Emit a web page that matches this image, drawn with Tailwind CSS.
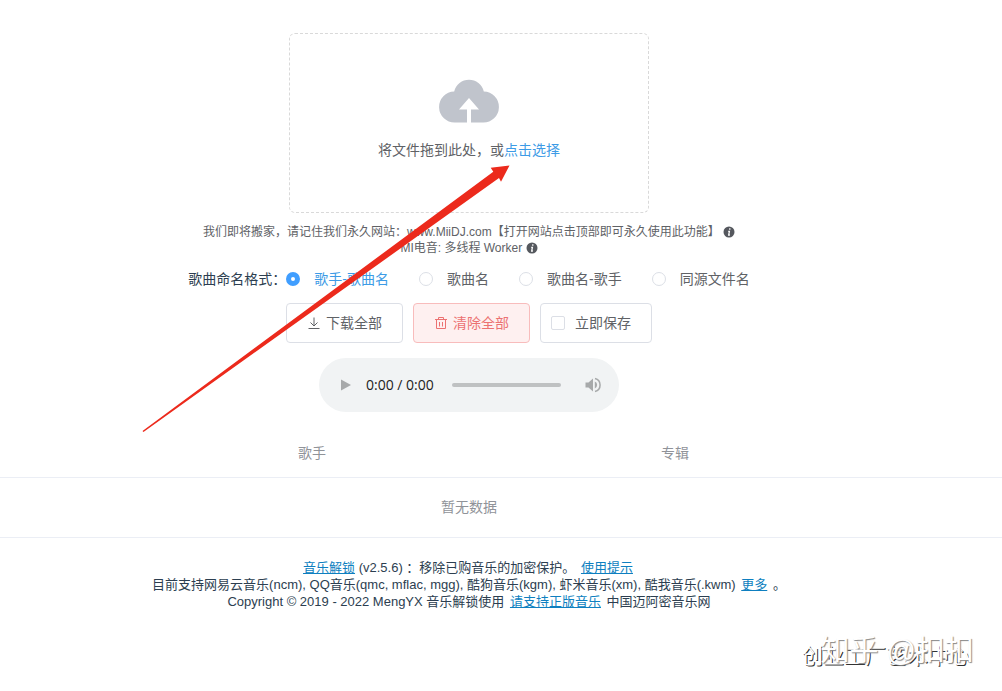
<!DOCTYPE html>
<html lang="zh-CN">
<head>
  <meta charset="UTF-8">
  <meta name="viewport" content="width=device-width, initial-scale=1">
  <title>音乐解锁</title>
  <script src="https://cdn.jsdelivr.net/npm/@tailwindcss/browser@4"></script>
</head>
<body class="relative min-h-screen overflow-x-hidden bg-white font-['Liberation_Sans','Noto_Sans_CJK_SC',sans-serif] text-sm text-[#606266]">

  <main class="flex flex-col items-center pt-[33px] pr-16">
    <!-- Upload -->
    <label class="flex h-[180px] w-[360px] cursor-pointer flex-col items-center rounded-md border border-dashed border-[#d9d9d9] pt-[43px]">
      <svg class="h-[46px] w-[60px]" viewBox="0 0 60 46" fill="#c0c4cc" aria-hidden="true">
        <path d="M16 45.500A15.500 15.500 0 1 1 15.200 14.500A15.200 15.200 0 0 1 44.800 14.500A15.500 15.500 0 1 1 44 45.500H32V32.500H40L30 21L20 32.500H28V45.500Z"/>
      </svg>
      <span class="mt-[17px] leading-5">将文件拖到此处，或<span class="text-[#3d9be6]">点击选择</span></span>
      <input type="file" class="sr-only">
    </label>

    <div class="mt-[11px] text-center text-xs leading-4">
      <p>我们即将搬家，请记住我们永久网站：www.MiiDJ.com【打开网站点击顶部即可永久使用此功能】
        <svg class="inline h-3 w-3 align-[-2px]" viewBox="0 0 12 12" aria-hidden="true"><circle cx="6" cy="6" r="5.500" fill="#55585e"/><path d="M6.800 2.300v1.500M5.200 5.300h1.200l-.7 3.700h1.200" stroke="#fff" stroke-width="1.300" fill="none"/></svg>
      </p>
      <p>MI电音: 多线程 Worker
        <svg class="inline h-3 w-3 align-[-2px]" viewBox="0 0 12 12" aria-hidden="true"><circle cx="6" cy="6" r="5.500" fill="#55585e"/><path d="M6.800 2.300v1.500M5.200 5.300h1.200l-.7 3.700h1.200" stroke="#fff" stroke-width="1.300" fill="none"/></svg>
      </p>
    </div>

    <!-- Naming format -->
    <fieldset class="mt-[13px] flex items-center leading-5">
      <legend class="float-left text-[#2c3e50]">歌曲命名格式：</legend>
      <div class="flex gap-[30px]">
        <label class="flex items-center gap-[14px] text-[#3d9be6]"><input type="radio" name="format" checked class="h-[14px] w-[14px] appearance-none rounded-full border border-[#dcdfe6] checked:border-5 checked:border-[#409eff]">歌手-歌曲名</label>
        <label class="flex items-center gap-[14px]"><input type="radio" name="format" class="h-[14px] w-[14px] appearance-none rounded-full border border-[#dcdfe6] checked:border-5 checked:border-[#409eff]">歌曲名</label>
        <label class="flex items-center gap-[14px]"><input type="radio" name="format" class="h-[14px] w-[14px] appearance-none rounded-full border border-[#dcdfe6] checked:border-5 checked:border-[#409eff]">歌曲名-歌手</label>
        <label class="flex items-center gap-[14px]"><input type="radio" name="format" class="h-[14px] w-[14px] appearance-none rounded-full border border-[#dcdfe6] checked:border-5 checked:border-[#409eff]">同源文件名</label>
      </div>
    </fieldset>

    <div class="mt-[14px] flex gap-[10px]">
      <button type="button" class="flex h-10 items-center gap-[5px] rounded border border-[#dcdfe6] px-5">
        <svg class="h-[14px] w-[14px]" viewBox="0 0 14 14" fill="none" stroke="#606266" aria-hidden="true"><path d="M7 1.500v8.500M3.500 6.500l3.500 3.500 3.500-3.500M1.500 12.500h11"/></svg>
        下载全部
      </button>
      <button type="button" class="flex h-10 items-center gap-[5px] rounded border border-[#f8bcbc] bg-[#fef0f0] px-5 text-[#ec7272]">
        <svg class="h-[14px] w-[14px]" viewBox="0 0 14 14" fill="none" stroke="#ec7272" aria-hidden="true"><path d="M1 3.500h12M4.500 3.500v-2h5v2M2.500 3.500v9h9v-9M5.500 6v4.500M8.500 6v4.500"/></svg>
        清除全部
      </button>
      <label class="flex h-10 items-center gap-[10px] rounded border border-[#dcdfe6] pr-5 pl-[10px]">
        <input type="checkbox" class="h-[14px] w-[14px] appearance-none rounded-xs border border-[#dcdfe6] checked:bg-[#409eff]">立即保存
      </label>
    </div>

    <!-- Player -->
    <div class="mt-[15px] flex h-[54px] w-[300px] items-center rounded-full bg-[#f1f3f4] pr-[17px] pl-[22px]">
      <button type="button" aria-label="播放"><svg class="h-3 w-[10px]" viewBox="0 0 10 12" fill="#a7a9aa"><path d="M0 0.500L10 6L0 11.500Z"/></svg></button>
      <span class="ml-[15px] font-['Open_Sans',sans-serif] text-sm text-[#222]">0:00 / 0:00</span>
      <input type="range" value="0" aria-label="进度" class="ml-[18px] h-1 min-w-0 flex-1 appearance-none rounded-full bg-[#bfc1c2] [&::-webkit-slider-thumb]:appearance-none">
      <button type="button" aria-label="音量" class="ml-[23px]"><svg class="h-[18px] w-[18px]" viewBox="0 0 18 18"><path d="M1.500 6.500H4.500L9 2.500V15.500L4.500 11.500H1.500Z" fill="#a7a9aa"/><path d="M10.800 5.500a3.800 3.800 0 0 1 0 7Z" fill="#a7a9aa"/><path d="M11 2.500a6.700 6.700 0 0 1 0 13" fill="none" stroke="#a7a9aa" stroke-width="1.500"/></svg></button>
    </div>
  </main>

  <table class="mt-[17px] w-full table-fixed text-left text-[#909399]">
    <thead>
      <tr class="h-12 border-b border-[#ebeef5]">
        <th class="w-[288px]"></th>
        <th class="w-[363px] px-[10px] font-normal">歌手</th>
        <th class="px-[10px] font-normal">专辑</th>
      </tr>
    </thead>
    <tbody>
      <tr class="h-[60px] border-b border-[#ebeef5]">
        <td colspan="3" class="pr-16 text-center">暂无数据</td>
      </tr>
    </tbody>
  </table>

  <footer class="mt-[21px] pr-16 text-center text-[13px] leading-[17px] text-[#2c3e50]">
    <p><a href="#" class="text-[#0e7fc0] underline">音乐解锁</a> (v2.5.6) ：移除已购音乐的加密保护。 <a href="#" class="mx-0.5 text-[#0e7fc0] underline">使用提示</a></p>
    <p>目前支持网易云音乐(ncm), QQ音乐(qmc, mflac, mgg), 酷狗音乐(kgm), 虾米音乐(xm), 酷我音乐(.kwm) <a href="#" class="mx-0.5 text-[#0e7fc0] underline">更多</a> 。</p>
    <p>Copyright © 2019 - 2022 MengYX 音乐解锁使用 <a href="#" class="mx-0.5 text-[#0e7fc0] underline">请支持正版音乐</a> 中国迈阿密音乐网</p>
  </footer>

  <!-- Pointer arrow over the page -->
  <svg class="pointer-events-none absolute top-[160px] left-[140px] h-[280px] w-[380px]" viewBox="140 160 380 280" fill="#ec2a1c" aria-hidden="true">
    <path d="M142.500 431L493.300 171.700L490.700 167.700L509.500 165.500L501 181.700L499 178L143.500 432Z"/>
  </svg>

  <!-- Watermarks -->
  <div class="absolute top-[640px] right-[32px] text-[21px] leading-8 whitespace-nowrap text-white [text-shadow:1px_1px_0_#333]">创业工厂艺术中心</div>
  <div class="absolute top-[633px] right-[28px] text-[29px] leading-9 whitespace-nowrap text-white [text-shadow:1px_1px_1px_#888]">知乎 @扣扣</div>
</body>
</html>
